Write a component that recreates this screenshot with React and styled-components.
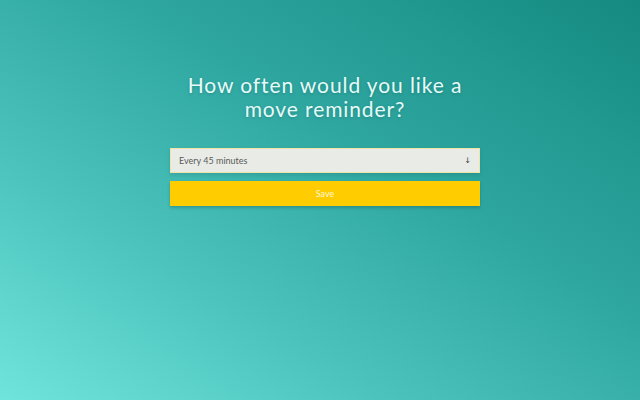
import React from 'react';
import styled, { createGlobalStyle } from 'styled-components';

const GlobalStyle = createGlobalStyle`
  html, body {
    margin: 0;
    padding: 0;
    height: 100%;
  }
  #root {
    height: 100%;
  }
`;

const Page = styled.div`
  height: 100vh;
  box-sizing: border-box;
  padding-top: 73px;
  display: flex;
  flex-direction: column;
  align-items: center;
  background: linear-gradient(32deg, #6fe4dc 0%, #4cc3bd 30%, #2fa7a1 60%, #148a80 100%);
  font-family: Lato, 'Liberation Sans', sans-serif;
`;

const Title = styled.h1`
  margin: 0 0 27px 10px;
  font-size: 21px;
  font-weight: 400;
  line-height: 24px;
  letter-spacing: 0.9px;
  text-align: center;
  color: #e6fbf8;
  text-shadow: 0 1px 3px rgba(0, 60, 55, 0.25);
`;

const Line = styled.span`
  display: block;
`;

const Form = styled.div`
  width: 310px;
  margin-left: 10px;
  display: flex;
  flex-direction: column;
  gap: 8px;
`;

const Select = styled.div`
  height: 25px;
  box-sizing: border-box;
  display: flex;
  align-items: center;
  justify-content: space-between;
  padding: 0 8px 0 8px;
  background: #e9ece6;
  border: 1px solid #f1e2a8;
  font-size: 9px;
  color: #5a5a5a;
  box-shadow: 0 2px 4px rgba(0, 60, 55, 0.15);
`;

const Arrow = styled.span`
  font-family: 'DejaVu Sans', sans-serif;
  font-size: 8px;
  color: #444;
`;

const Button = styled.button`
  height: 25px;
  border: none;
  background: #ffcc00;
  color: #fff8d8;
  font-family: inherit;
  font-size: 9px;
  box-shadow: 0 2px 3px rgba(0, 60, 55, 0.25);
`;

export default function App() {
  return (
    <Page>
      <GlobalStyle />
      <Title>
        <Line>How often would you like a</Line>
        <Line>move reminder?</Line>
      </Title>
      <Form>
        <Select>
          <span>Every 45 minutes</span>
          <Arrow>↓</Arrow>
        </Select>
        <Button>Save</Button>
      </Form>
    </Page>
  );
}
